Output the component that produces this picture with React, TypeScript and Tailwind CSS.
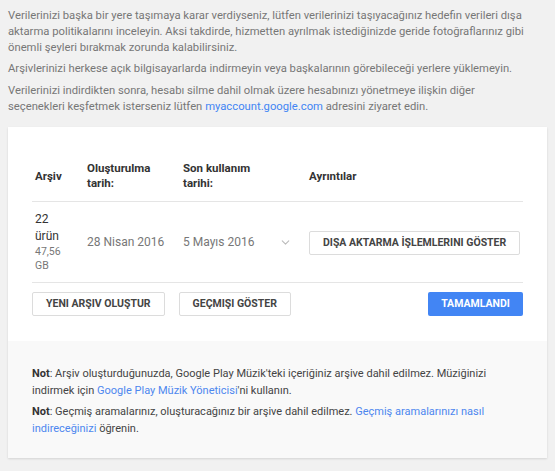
import { ChevronDown } from 'lucide-react';

const font = { fontFamily: 'Roboto, "Liberation Sans", sans-serif' };

function OutlineButton({ children }: { children: React.ReactNode }) {
  return (
    <button className="h-6 px-[13px] bg-white border border-[#dcdcdc] rounded-[2px] text-[10.5px] font-bold text-[#444] uppercase whitespace-nowrap">
      {children}
    </button>
  );
}

export default function App() {
  return (
    <div className="min-h-[471px] bg-[#f1f1f1] px-2 pt-2 pb-3" style={font}>
      {/* ── Intro text ── */}
      <div className="text-[11.25px] leading-4 text-[#777] whitespace-nowrap">
        <p>
          Verilerinizi başka bir yere taşımaya karar verdiyseniz, lütfen verilerinizi taşıyacağınız hedefin verileri dışa
          <br />
          aktarma politikalarını inceleyin. Aksi takdirde, hizmetten ayrılmak istediğinizde geride fotoğraflarınız gibi
          <br />
          önemli şeyleri bırakmak zorunda kalabilirsiniz.
        </p>
        <p className="mt-[5px]">
          Arşivlerinizi herkese açık bilgisayarlarda indirmeyin veya başkalarının görebileceği yerlere yüklemeyin.
        </p>
        <p className="mt-[6px]">
          Verilerinizi indirdikten sonra, hesabı silme dahil olmak üzere hesabınızı yönetmeye ilişkin diğer
          <br />
          seçenekleri keşfetmek isterseniz lütfen <span className="text-[#4285f4]">myaccount.google.com</span> adresini ziyaret edin.
        </p>
      </div>

      {/* ── Card ── */}
      <div className="mt-[12px] bg-white shadow-[0_1px_2px_rgba(0,0,0,0.12)]">
        <div className="px-6 pt-6 pb-[25px]">
          {/* header */}
          <div className="grid grid-cols-[52px_96px_126px_1fr] items-center h-[51px] border-b border-[#e5e5e5] text-[11.5px] leading-[15px] font-bold text-[#333]">
            <div className="pl-[3px]">Arşiv</div>
            <div className="pl-[3px]">Oluşturulma<br />tarih:</div>
            <div className="pl-[3px]">Son kullanım<br />tarihi:</div>
            <div className="pl-[3px]">Ayrıntılar</div>
          </div>

          {/* row */}
          <div className="grid grid-cols-[52px_96px_126px_1fr] items-center h-[81px] border-b border-[#e5e5e5]">
            <div className="pl-[3px]">
              <div className="text-[12px] leading-[17px] text-[#333]">22<br />ürün</div>
              <div className="text-[10.5px] leading-[14px] text-[#777]">47,56<br />GB</div>
            </div>
            <div className="pl-[3px] text-[12px] text-[#777]">28 Nisan 2016</div>
            <div className="pl-[3px] flex items-center justify-between pr-[14px] text-[12px] text-[#777]">
              <span>5 Mayıs 2016</span>
              <ChevronDown size={13} className="text-[#bbb]" strokeWidth={2} />
            </div>
            <div className="pl-[3px]">
              <OutlineButton>Dışa aktarma İşlemlerini göster</OutlineButton>
            </div>
          </div>

          {/* actions */}
          <div className="flex items-center gap-[14px] mt-[9px]">
            <OutlineButton>Yeni arşiv oluştur</OutlineButton>
            <OutlineButton>Geçmişi göster</OutlineButton>
            <button className="ml-auto h-6 w-[95px] bg-[#4285f4] rounded-[2px] text-[10.5px] font-bold text-white uppercase">
              Tamamlandı
            </button>
          </div>
        </div>

        {/* ── Footer notes ── */}
        <div className="bg-[#f9f9f9] px-6 pt-6 pb-[21px] text-[11px] leading-[17px] text-[#444] whitespace-nowrap">
          <p>
            <b className="text-[#333]">Not</b>: Arşiv oluşturduğunuzda, Google Play Müzik'teki içeriğiniz arşive dahil edilmez. Müziğinizi
            <br />
            indirmek için <span className="text-[#4d87ef]">Google Play Müzik Yöneticisi</span>'ni kullanın.
          </p>
          <p className="mt-[4px]">
            <b className="text-[#333]">Not</b>: Geçmiş aramalarınız, oluşturacağınız bir arşive dahil edilmez.{' '}
            <span className="text-[#4d87ef]">Geçmiş aramalarınızı nasıl</span>
            <br />
            <span className="text-[#4d87ef]">indireceğinizi</span> öğrenin.
          </p>
        </div>
      </div>
    </div>
  );
}
